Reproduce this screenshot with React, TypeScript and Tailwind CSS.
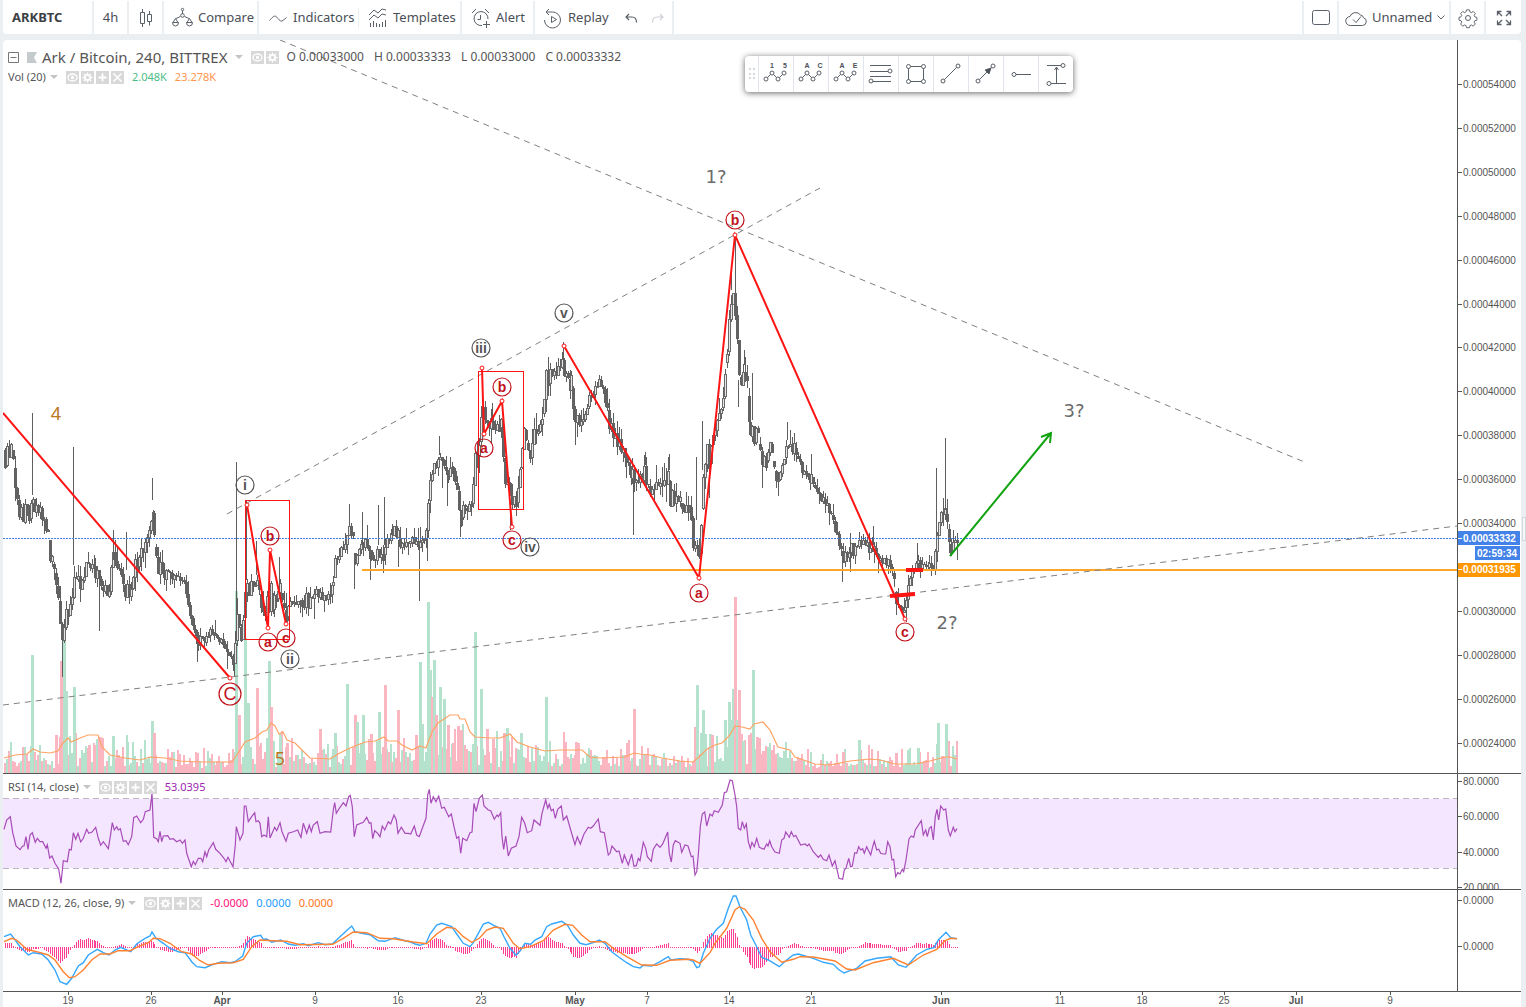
import React from 'react';

type Point = [number, number];
type Band = [number, number, number];

const STEP = 1.967;
const FIRST_BAR = 5;
const BAR_COUNT = 485;

// x, top and bottom of the range in which the bodies trade
const BANDS: Band[] = [
  [4, 447, 475], [8, 444, 462], [11, 440, 462], [13, 450, 472], [16, 477, 503], [19, 500, 517], [22, 510, 523],
  [26, 497, 525], [29, 513, 532], [32, 492, 510], [36, 495, 513], [40, 505, 517], [44, 510, 527], [48, 523, 538],
  [50, 540, 563], [53, 560, 570], [56, 573, 593], [59, 593, 613], [61, 608, 667], [63, 627, 670], [65, 610, 628],
  [68, 607, 630], [71, 593, 608], [74, 563, 607], [77, 563, 587], [80, 573, 593], [84, 567, 590], [88, 555, 573],
  [92, 557, 573], [96, 560, 580], [99, 567, 590], [102, 580, 593], [106, 583, 597], [109, 587, 603], [112, 557, 587],
  [114, 543, 567], [117, 560, 570], [121, 567, 577], [124, 577, 597], [128, 583, 597], [132, 580, 597], [134, 550, 580],
  [138, 547, 567], [142, 547, 563], [146, 535, 550], [150, 527, 537], [153, 493, 533], [155, 533, 567], [157, 560, 570],
  [160, 550, 582], [164, 567, 582], [168, 565, 577], [172, 570, 582], [178, 572, 583], [184, 577, 587], [187, 583, 607],
  [191, 603, 627], [194, 623, 637], [198, 630, 647], [202, 633, 643], [206, 632, 643], [210, 627, 637], [214, 627, 637],
  [218, 635, 642], [222, 637, 647], [226, 643, 657], [230, 647, 660], [233, 653, 668], [235, 640, 663], [237, 603, 640],
  [239, 613, 633], [241, 627, 643], [244, 573, 637], [246, 572, 597], [249, 580, 600], [253, 580, 593], [257, 573, 590],
  [260, 587, 607], [263, 607, 620], [266, 613, 622], [268, 577, 627], [270, 577, 627], [273, 593, 613], [276, 590, 603],
  [280, 580, 593], [283, 600, 610], [286, 610, 623], [289, 600, 613], [293, 597, 607], [298, 597, 610], [303, 593, 610],
  [308, 592, 610], [311, 590, 610], [316, 587, 597], [320, 590, 603], [325, 595, 600], [330, 590, 598], [333, 577, 593],
  [335, 553, 577], [339, 550, 563], [343, 543, 553], [347, 533, 545], [350, 520, 533], [353, 523, 553], [355, 553, 578],
  [358, 547, 560], [363, 540, 550], [368, 537, 553], [371, 547, 567], [375, 550, 567], [379, 547, 565], [383, 547, 563],
  [386, 537, 550], [390, 533, 542], [394, 523, 540], [397, 523, 540], [399, 537, 547], [404, 540, 547], [409, 540, 547],
  [413, 535, 545], [419, 540, 548], [423, 533, 547], [426, 530, 538], [428, 490, 530], [430, 467, 500], [434, 463, 473],
  [438, 457, 467], [440, 447, 463], [444, 460, 470], [448, 463, 480], [452, 463, 473], [455, 463, 487], [458, 487, 503],
  [461, 500, 527], [464, 502, 513], [468, 503, 513], [472, 498, 507], [475, 440, 497], [478, 433, 460], [480, 433, 450],
  [482, 377, 433], [484, 400, 417], [487, 417, 427], [491, 418, 433], [495, 423, 437], [499, 423, 433], [501, 410, 427],
  [504, 433, 487], [507, 460, 507], [510, 460, 520], [512, 493, 520], [514, 490, 507], [517, 490, 510], [520, 457, 487],
  [523, 425, 457], [526, 430, 450], [529, 450, 460], [532, 440, 457], [535, 423, 440], [538, 423, 437], [541, 423, 437],
  [543, 397, 420], [546, 367, 400], [550, 368, 383], [554, 370, 380], [558, 365, 377], [561, 355, 370], [564, 360, 380],
  [568, 368, 380], [571, 370, 400], [574, 397, 420], [578, 413, 428], [582, 417, 428], [586, 403, 417], [590, 390, 403],
  [594, 387, 397], [598, 378, 390], [602, 380, 393], [606, 388, 407], [609, 410, 433], [613, 423, 440], [617, 433, 447],
  [621, 438, 453], [624, 446, 462], [628, 451, 470], [632, 459, 484], [637, 473, 490], [641, 470, 484], [645, 460, 481],
  [648, 477, 492], [651, 488, 501], [655, 481, 492], [660, 479, 488], [665, 477, 488], [668, 466, 484], [671, 488, 518],
  [675, 492, 503], [679, 492, 503], [683, 507, 518], [687, 499, 510], [691, 507, 518], [694, 514, 566], [697, 514, 569],
  [700, 529, 577], [702, 473, 529], [704, 444, 488], [707, 442, 473], [710, 433, 473], [713, 429, 444], [716, 418, 433],
  [720, 407, 422], [723, 396, 407], [725, 351, 396], [727, 348, 362], [729, 318, 351], [731, 285, 322], [733, 280, 307],
  [736, 288, 329], [738, 322, 381], [741, 377, 392], [744, 359, 381], [747, 366, 392], [749, 396, 447], [752, 418, 447],
  [755, 418, 447], [757, 414, 436], [760, 444, 459], [763, 455, 470], [766, 455, 470], [769, 440, 455], [772, 444, 466],
  [775, 470, 479], [779, 473, 490], [782, 459, 481], [785, 444, 459], [789, 438, 451], [793, 440, 455], [797, 451, 462],
  [801, 459, 473], [806, 470, 477], [811, 473, 484], [816, 484, 496], [821, 494, 503], [827, 501, 507], [831, 507, 521],
  [835, 521, 534], [839, 532, 555], [843, 551, 564], [847, 551, 558], [850, 540, 560], [855, 544, 555], [860, 536, 547],
  [866, 538, 549], [870, 544, 555], [874, 544, 551], [878, 551, 560], [883, 558, 568], [887, 558, 566], [891, 560, 573],
  [894, 573, 584], [896, 592, 610], [900, 603, 610], [904, 604, 614], [907, 588, 604], [910, 571, 588], [912, 566, 577],
  [917, 558, 569], [921, 555, 568], [925, 564, 569], [929, 562, 571], [933, 562, 573], [935, 540, 573], [938, 525, 540],
  [941, 508, 525], [945, 507, 514], [947, 514, 529], [949, 529, 544], [951, 544, 555], [954, 536, 547], [957, 538, 545],
];

// long single wicks: x, top, bottom
const WICKS: Band[] = [
  [32, 413, 495], [73, 447, 565], [152, 478, 500], [113, 530, 560], [126, 532, 570], [99, 570, 631], [236, 462, 640],
  [246, 500, 580], [256, 541, 575], [279, 557, 590], [62, 640, 677], [197, 640, 662], [234, 660, 677], [349, 504, 525],
  [362, 512, 545], [378, 505, 545], [384, 497, 545], [354, 560, 589], [370, 550, 580], [398, 540, 567], [419, 545, 601],
  [427, 530, 561], [439, 436, 455], [447, 470, 506], [442, 460, 488], [460, 520, 537], [482, 368, 400], [492, 403, 420],
  [510, 510, 530], [563, 342, 360], [575, 415, 445], [633, 480, 535], [626, 460, 478], [645, 452, 465], [669, 454, 470],
  [696, 457, 520], [702, 421, 470], [709, 466, 498], [731, 270, 290], [735, 235, 292], [744, 350, 365], [752, 373, 420],
  [738, 380, 407], [762, 460, 488], [787, 422, 440], [811, 454, 475], [842, 560, 582], [850, 533, 572], [873, 526, 545],
  [936, 468, 540], [945, 438, 510], [896, 600, 615], [917, 543, 560], [953, 530, 540], [302, 600, 617], [314, 600, 619],
];

// tall volume bars: x, top, 1 for a rising bar
const VOLUME_PEAKS: Band[] = [
  [32, 655, 1], [61, 661, 0], [64, 630, 1], [66, 691, 1], [74, 687, 1], [56, 735, 0], [89, 745, 0], [99, 737, 0],
  [113, 736, 1], [127, 742, 1], [152, 721, 1], [154, 733, 0], [236, 591, 1], [239, 715, 0], [245, 638, 1], [248, 703, 1],
  [257, 688, 0], [269, 661, 1], [271, 707, 0], [280, 736, 1], [287, 743, 0], [320, 729, 0], [335, 733, 1], [347, 684, 1],
  [355, 715, 0], [357, 722, 1], [363, 715, 1], [371, 734, 0], [379, 712, 1], [385, 685, 0], [398, 710, 0], [416, 735, 0],
  [420, 662, 1], [422, 724, 1], [428, 602, 1], [430, 670, 1], [432, 697, 0], [434, 660, 1], [436, 715, 0], [440, 687, 1],
  [444, 699, 1], [448, 725, 0], [458, 726, 0], [461, 730, 0], [475, 632, 1], [481, 689, 1], [487, 729, 0], [493, 739, 0],
  [504, 733, 0], [507, 728, 1], [521, 733, 1], [546, 697, 1], [565, 742, 0], [576, 742, 0], [634, 709, 0], [628, 747, 0],
  [695, 727, 0], [697, 685, 1], [701, 733, 1], [703, 710, 1], [705, 734, 1], [710, 734, 1], [712, 735, 0], [725, 720, 1],
  [729, 702, 1], [731, 720, 1], [733, 689, 1], [735, 597, 0], [737, 720, 1], [739, 690, 0], [741, 734, 0], [743, 741, 1],
  [749, 735, 0], [751, 733, 0], [753, 670, 1], [757, 737, 0], [763, 751, 0], [843, 752, 0], [859, 740, 1], [896, 753, 0],
  [918, 748, 1], [938, 723, 1], [946, 724, 1], [942, 756, 0], [944, 757, 0],
];

const VOLUME_AVERAGE: Point[] = [
  [4, 758], [15, 755], [27, 754], [33, 749], [40, 752], [50, 753], [58, 751], [62, 744], [68, 738], [71, 742], [80, 738],
  [88, 735], [98, 735], [102, 747], [110, 755], [125, 758], [140, 760], [150, 757], [165, 758], [180, 761], [200, 762],
  [232, 762], [240, 750], [245, 742], [255, 738], [262, 732], [267, 730], [271, 723], [275, 726], [279, 734], [283, 732],
  [287, 740], [295, 743], [302, 750], [310, 758], [330, 759], [338, 754], [350, 748], [365, 742], [375, 741], [384, 737],
  [388, 741], [397, 741], [402, 745], [412, 750], [420, 746], [426, 748], [432, 732], [438, 723], [450, 715], [458, 715],
  [460, 719], [465, 719], [470, 732], [475, 737], [490, 738], [500, 738], [510, 734], [517, 742], [530, 747], [545, 751],
  [560, 750], [582, 750], [590, 757], [600, 758], [625, 757], [634, 753], [640, 754], [650, 755], [662, 758], [680, 761],
  [693, 762], [700, 756], [707, 749], [715, 745], [722, 743], [730, 735], [735, 726], [742, 727], [750, 729], [754, 724],
  [763, 722], [770, 730], [778, 747], [790, 750], [795, 757], [815, 764], [830, 765], [850, 761], [870, 759], [880, 760],
  [895, 764], [915, 764], [930, 761], [945, 757], [950, 757], [957, 759],
];

// indicator traces are stored in thirds of a pixel, in two halves
const readTrace = (text: string, left: number): Point[] =>
  text.split(' ').map((pair) => {
    const [x, y] = pair.split(',').map(Number);
    return [left + x / 3, 770 + y / 3];
  });

const RSI: Point[] = [
  ...readTrace(
    '12,178 20,150 31,140 38,188 48,228 60,239 68,228 72,228 78,200 84,238 90,195 97,188 106,217 112,205 120,215 128,215 138,235 142,224 149,264 156,258 165,280 176,297 183,340 190,272 202,275 208,238 214,240 220,188 227,208 234,190 242,216 250,205 260,178 266,190 276,186 287,172 295,205 302,226 310,215 325,236 331,200 337,158 343,180 350,170 355,180 361,176 370,214 378,212 385,224 395,200 401,143 410,138 422,158 430,148 436,125 450,120 456,70 461,202 470,206 475,215 480,184 485,215 490,198 503,197 510,208 520,206 530,215 540,210 547,220 555,210 560,250 574,290 580,274 586,284 595,265 603,265 608,275 615,245 620,260 626,240 640,218 647,238 660,250 672,265 678,275 684,262 699,290 706,225 709,170 720,210 729,190 733,108 738,108 745,155 755,140 764,128 768,155 775,152 780,160 785,200 792,195 800,200 805,140 810,204 824,172 830,182 840,158 846,185 858,214 865,190 880,185 893,180 897,190 903,202 910,160 920,190 928,165 934,185 940,165 952,155 960,190 975,185 992,186 1000,120 1004,98 1009,130 1018,115 1030,98 1038,108 1046,80 1051,76 1057,110 1063,200 1070,165 1090,157 1100,142 1108,160 1113,158 1118,206 1124,182 1133,190 1140,200 1147,168 1154,180 1165,155 1172,162 1182,135 1189,150 1194,190 1204,172 1215,190 1225,190 1232,192 1243,168 1250,195 1258,200 1267,175 1278,145 1283,75 1288,58 1293,100 1300,80 1308,95 1316,78 1325,115 1333,112 1346,140 1354,132 1362,170 1370,205 1376,200 1382,250 1388,205 1400,212 1410,188 1416,186 1422,100 1428,125 1438,85',
    0
  ),
  ...readTrace(
    '7,75 12,108 25,120 32,122 43,148 51,135 55,140 62,128 66,200 71,238 77,198 85,258 94,235 108,228 117,200 125,142 134,160 142,188 155,182 162,150 180,166 186,130 197,90 203,115 208,103 214,122 220,118 226,145 233,118 244,108 250,150 260,138 272,180 285,224 292,200 301,222 312,192 325,172 332,175 340,168 355,147 361,185 373,188 385,255 390,250 396,228 410,245 417,243 427,280 433,255 445,285 455,252 462,289 469,287 475,265 480,272 490,217 497,235 502,260 514,274 520,238 530,222 540,232 548,222 563,186 568,250 574,276 580,225 586,212 600,220 605,247 615,225 624,228 634,260 639,258 645,315 650,305 655,255 661,170 667,132 674,126 680,168 690,132 697,138 703,122 715,127 727,105 733,68 740,65 750,30 757,32 765,75 770,110 775,175 782,180 787,155 793,175 799,162 805,215 811,235 816,217 823,230 830,205 838,232 852,238 860,222 864,228 869,212 875,230 885,246 898,250 905,210 912,205 917,186 928,202 934,185 941,200 947,196 962,225 975,222 982,228 987,222 1000,245 1015,262 1022,255 1030,268 1040,272 1047,255 1057,288 1065,272 1077,325 1088,328 1093,300 1098,295 1106,265 1112,290 1117,288 1124,248 1130,250 1136,230 1142,240 1148,236 1153,250 1160,230 1172,255 1178,230 1183,214 1190,240 1196,238 1202,250 1210,252 1217,252 1223,215 1230,230 1236,270 1241,268 1247,320 1253,308 1260,312 1267,298 1271,305 1278,270 1287,207 1294,198 1301,202 1306,180 1324,152 1330,195 1337,180 1342,200 1348,175 1354,170 1360,210 1366,140 1371,118 1376,150 1382,108 1391,120 1397,117 1405,180 1411,198 1420,172 1425,185 1431,176',
    480
  ),
];

const MACD: Point[] = [
  ...readTrace(
    '12,500 32,492 42,505 60,530 85,555 100,548 125,552 145,570 165,600 180,635 200,643 215,625 235,588 250,578 265,555 292,538 310,548 327,555 345,540 362,532 392,545 410,522 435,505 450,498 456,486 468,505 490,520 510,535 535,545 555,548 575,575 590,590 615,593 640,583 665,575 690,578 705,575 728,558 740,520 760,500 782,496 790,508 800,507 815,517 842,510 865,522 885,526 910,521 925,527 955,518 975,524 997,522 1020,500 1042,480 1055,468 1065,485 1085,490 1110,494 1135,512 1155,514 1185,503 1215,512 1232,516 1245,522 1260,526 1278,520 1290,492 1310,465 1325,460 1355,470 1370,492 1390,520 1410,530 1420,518 1438,485',
    0
  ),
  ...readTrace(
    '10,462 25,457 45,468 60,475 72,500 90,535 108,556 120,543 135,520 152,523 165,510 185,500 200,470 215,462 245,454 262,465 280,495 300,520 318,524 340,518 358,510 375,520 395,545 415,560 440,578 460,590 480,594 490,586 515,588 540,575 565,560 572,570 600,566 625,568 640,575 650,593 658,590 670,550 690,505 710,478 730,460 745,415 760,378 768,378 780,410 800,450 812,495 830,530 845,562 865,570 898,590 920,570 940,555 955,552 975,558 1000,565 1030,577 1060,583 1075,598 1092,609 1110,602 1130,595 1155,573 1190,565 1232,560 1255,585 1278,592 1310,555 1340,538 1362,533 1375,510 1398,487 1412,503 1431,506',
    480
  ),
];

const SIGNAL: Point[] = [
  ...readTrace(
    '12,515 35,505 50,510 80,538 110,545 145,555 165,570 190,605 208,623 225,620 250,600 275,570 300,552 330,552 355,542 390,542 415,530 445,518 460,505 480,506 510,520 545,545 575,552 600,572 625,585 655,580 700,578 730,568 755,530 780,510 820,512 860,514 900,524 998,523 1030,505 1060,486 1100,488 1140,505 1180,506 1240,516 1280,521 1310,492 1340,472 1365,475 1390,500 1415,517 1438,505',
    0
  ),
  ...readTrace(
    '20,480 45,471 70,475 100,520 120,536 150,530 190,512 220,480 255,463 278,466 305,495 330,515 375,515 400,535 440,560 485,585 530,586 570,571 625,568 640,570 660,580 690,548 705,520 740,475 765,420 778,410 795,418 820,450 845,505 870,545 905,577 940,568 960,560 1000,561 1065,573 1100,597 1125,600 1180,578 1240,565 1285,585 1330,555 1370,538 1395,512 1412,505 1431,506',
    480
  ),
];

const valueAt = (points: number[][], x: number, column = 1) => {
  if (x <= points[0][0]) return points[0][column];
  for (let i = 1; i < points.length; i++) {
    if (x <= points[i][0]) {
      const a = points[i - 1];
      const b = points[i];
      return a[column] + ((b[column] - a[column]) * (x - a[0])) / (b[0] - a[0]);
    }
  }
  return points[points.length - 1][column];
};

const createRandom = (seed: number) => () => {
  seed = (seed * 1664525 + 1013904223) % 4294967296;
  return seed / 4294967296;
};

const toPoints = (points: Point[]) => points.map(([x, y]) => `${x.toFixed(1)},${y.toFixed(1)}`).join(' ');

const buildBars = () => {
  const random = createRandom(11);
  let previous = 450;
  return Array.from({ length: BAR_COUNT }, (_, i) => {
    const x = Math.round(FIRST_BAR + i * STEP);
    const top = valueAt(BANDS, x, 1);
    const bottom = valueAt(BANDS, x, 2);
    const open = Math.min(Math.max(previous, top), bottom);
    const share = random();
    // lean away from the open so that most bodies span the range
    const close = open - top > bottom - open ? top + (bottom - top) * share * 0.6 : bottom - (bottom - top) * share * 0.6;
    previous = close;
    const high = Math.min(open, close) - random() * random() * 18;
    const deep = Math.max(open, close) + random() * random() * 18;
    const volume = 5 + random() * random() * 30;
    const busy = Math.max(0, 764 - valueAt(VOLUME_AVERAGE, x)) * random() * 0.7;
    return { x, open, close, high, deep, volume: volume + busy };
  });
};

const BARS = buildBars();

const AXIS_TEXT = "font-['Liberation_Sans',Arial,sans-serif] text-[10px]";

const Trend = ({ from, to }: { from: Point; to: Point }) => (
  <line x1={from[0]} y1={from[1]} x2={to[0]} y2={to[1]} stroke="#808080" strokeDasharray="6 5" />
);

const Wave = ({ points }: { points: Point[] }) => (
  <g stroke="#ff1414">
    <polyline points={toPoints(points)} fill="none" strokeWidth="2" />
    {points.map(([x, y]) => (
      <circle key={`${x}-${y}`} cx={x} cy={y} r="2" fill="#fff" />
    ))}
  </g>
);

const WaveLabel = ({ x, y, text, color = '#555555' }: { x: number; y: number; text: string; color?: string }) => (
  <g>
    <circle cx={x} cy={y} r="9" fill="none" stroke={color} strokeWidth="1.2" />
    <text
      x={x}
      y={y + 5}
      textAnchor="middle"
      fill={color}
      className="font-['Liberation_Sans',Arial,sans-serif] text-[14px] font-bold"
    >
      {text}
    </text>
  </g>
);

const RED = '#c1121c';

const PriceChart = () => (
  <svg className="block h-full w-full" role="img" aria-label="Ark / Bitcoin price chart">
    <g transform="translate(-3 -40)">
      <g shapeRendering="crispEdges">
        {BARS.map(({ x, volume, open, close }) => (
          <rect key={x} x={x - 1} y={773 - volume} width="2" height={volume} fill={close < open ? '#b4e2cc' : '#fab7c1'} />
        ))}
        {VOLUME_PEAKS.map(([x, top, up]) => (
          <rect key={x} x={x - 1} y={top} width="3" height={773 - top} fill={up ? '#b4e2cc' : '#fab7c1'} />
        ))}
      </g>
      <polyline points={toPoints(VOLUME_AVERAGE)} fill="none" stroke="#ffa364" strokeWidth="1.2" />
      <g shapeRendering="crispEdges">
        {BARS.map(({ x, open, close, high, deep }) => {
          const top = Math.round(Math.min(open, close));
          const height = Math.max(1, Math.round(Math.abs(open - close)));
          return (
            <g key={x}>
              <rect x={x} y={Math.round(high)} width="1" height={Math.round(deep - high)} fill="#5f5f5f" />
              {close > open ? (
                <rect x={x - 1} y={top} width="3" height={height} fill="#626262" />
              ) : (
                <rect x={x - 0.5} y={top + 0.5} width="2" height={height} fill="#e6e6e6" stroke="#6a6a6a" />
              )}
            </g>
          );
        })}
        {WICKS.map(([x, top, bottom]) => (
          <rect key={`${x}-${top}`} x={x} y={top} width="1" height={bottom - top} fill="#5f5f5f" />
        ))}
      </g>

      <line x1="3" y1="538.5" x2="110%" y2="538.5" stroke="#3f7ee0" strokeDasharray="2 1" />
      <line x1="362" y1="570" x2="110%" y2="570" stroke="#ffa628" strokeWidth="2" />

      <Trend from={[280, 40]} to={[1307, 463]} />
      <Trend from={[227, 514]} to={[820, 188]} />
      <Trend from={[3, 705]} to={[1457, 526]} />

      <rect x="245.5" y="500.5" width="44" height="139" fill="none" stroke="#ff1414" />
      <rect x="478.5" y="371.5" width="45" height="138" fill="none" stroke="#ff1414" />

      <polyline points="3,413 230,678" fill="none" stroke="#ff1414" strokeWidth="2" />
      <circle cx="230" cy="678" r="2" fill="#fff" stroke="#ff1414" />
      <Wave points={[[247, 505], [268, 628], [270, 550], [286, 624]]} />
      <Wave points={[[482, 368], [484, 434], [502, 401], [512, 527]]} />
      <Wave points={[[564, 346], [699, 578], [735, 235], [905, 619]]} />
      <line x1="890" y1="596" x2="915" y2="594" stroke="#ff1414" strokeWidth="4" />
      <line x1="906" y1="570" x2="923" y2="570" stroke="#ff1414" strokeWidth="4" />
      <path d="M950 556 L1051 433 M1041 437 L1051 433 L1050 443" fill="none" stroke="#12a312" strokeWidth="2" />

      <WaveLabel x={245} y={485} text="i" />
      <WaveLabel x={290} y={659} text="ii" />
      <WaveLabel x={481} y={348} text="iii" />
      <WaveLabel x={530} y={547} text="iv" />
      <WaveLabel x={564} y={313} text="v" />
      <WaveLabel x={268} y={642} text="a" color={RED} />
      <WaveLabel x={270} y={536} text="b" color={RED} />
      <WaveLabel x={286} y={638} text="c" color={RED} />
      <WaveLabel x={484} y={448} text="a" color={RED} />
      <WaveLabel x={502} y={387} text="b" color={RED} />
      <WaveLabel x={512} y={540} text="c" color={RED} />
      <WaveLabel x={735} y={220} text="b" color={RED} />
      <WaveLabel x={699} y={593} text="a" color={RED} />
      <WaveLabel x={905} y={632} text="c" color={RED} />
      <circle cx="230" cy="694" r="11" fill="none" stroke={RED} strokeWidth="1.2" />
      <g textAnchor="middle">
        <text x="230" y="700" fill={RED} className="font-['Liberation_Sans',Arial,sans-serif] text-[18px]">C</text>
        <g className="font-['DejaVu_Sans',Verdana,sans-serif] text-[18px]" fill="#6c6c6c">
          <text x="716" y="183">1?</text>
          <text x="947" y="629">2?</text>
          <text x="1074" y="417">3?</text>
        </g>
        <g className="font-['Noto_Sans',sans-serif] text-[18px]" fill="#b8761e">
          <text x="56" y="420">4</text>
          <text x="280" y="765">5</text>
        </g>
      </g>
    </g>
  </svg>
);

const PRICES = Array.from({ length: 16 }, (_, i) => ({
  label: `0.000${54 - i * 2}000`,
  y: Math.round(45 + i * 43.9),
}));

const AxisLabel = ({ y, label }: { y: number; label: string }) => (
  <g>
    <path d={`M0 ${y - 0.5}h4`} stroke="#555555" />
    <text x="5" y={y + 3} fill="#555555">{label}</text>
  </g>
);

const PriceAxis = () => (
  <svg className={`block h-full w-full ${AXIS_TEXT}`} role="img" aria-label="Price scale">
    {PRICES.filter(({ label }) => label !== '0.00032000').map(({ label, y }) => (
      <AxisLabel key={label} label={label} y={y} />
    ))}
    <g stroke="none" fill="#ffffff" className="font-bold">
      <rect y="491" width="62" height="14" fill="#4382e8" />
      <rect x="17" y="506" width="45" height="14" fill="#4382e8" />
      <rect y="523" width="62" height="14" fill="#ff9800" />
      <path d="M0 498.5h4M0 529.5h4" stroke="#ffffff" />
      <text x="5" y="502">0.00033332</text>
      <text x="19" y="517">02:59:34</text>
      <text x="5" y="533">0.00031935</text>
    </g>
  </svg>
);

const RsiChart = () => (
  <svg className="block h-full w-full" role="img" aria-label="RSI chart">
    <g transform="translate(-3 -774)">
      <rect x="3" y="799" width="110%" height="69" fill="#f5e6ff" />
      <g stroke="#bdb3c4" strokeDasharray="6 4">
        <line x1="3" y1="798.5" x2="110%" y2="798.5" />
        <line x1="3" y1="868.5" x2="110%" y2="868.5" />
      </g>
      <polyline points={toPoints(RSI)} fill="none" stroke="#a64bb8" strokeWidth="1.2" />
    </g>
  </svg>
);

const MacdChart = () => (
  <svg className="block h-full w-full" role="img" aria-label="MACD chart">
    <g transform="translate(-3 -890)">
      <g shapeRendering="crispEdges" fill="#ff3d92">
        {BARS.map(({ x }) => {
          const size = Math.round((valueAt(SIGNAL, x) - valueAt(MACD, x)) * 1.1);
          return <rect key={x} x={x} y={size > 0 ? 948 - size : 947} width="1" height={Math.max(1, Math.abs(size))} />;
        })}
      </g>
      <polyline points={toPoints(MACD)} fill="none" stroke="#35a7ff" strokeWidth="1.4" />
      <polyline points={toPoints(SIGNAL)} fill="none" stroke="#ff8230" strokeWidth="1.4" />
    </g>
  </svg>
);

const DATES: [number, string][] = [
  [68, '19'], [151, '26'], [222, 'Apr'], [315, '9'], [398, '16'], [481, '23'], [575, 'May'], [647, '7'],
  [729, '14'], [811, '21'], [941, 'Jun'], [1060, '11'], [1142, '18'], [1224, '25'], [1296, 'Jul'], [1390, '9'],
];

const Caret = () => (
  <svg width="8" height="4" viewBox="0 0 8 4" className="shrink-0" aria-hidden="true">
    <path d="M0 0h8L4 4z" fill="#c4c4c4" />
  </svg>
);

const GLYPHS: Record<string, React.ReactNode> = {
  Hide: (
    <>
      <ellipse cx="6.5" cy="6.5" rx="4.5" ry="3.5" />
      <circle cx="6.5" cy="6.5" r="1" fill="#fff" />
    </>
  ),
  Format: (
    <>
      <circle cx="6.5" cy="6.5" r="2.6" strokeWidth="1.8" />
      <path d="M6.5 1.5v2M6.5 9.5v2M1.5 6.5h2M9.5 6.5h2M3 3l1.4 1.4M8.6 8.6L10 10M10 3L8.6 4.4M4.4 8.6L3 10" />
    </>
  ),
  Add: <path d="M6.5 2.5v8M2.5 6.5h8" strokeWidth="1.8" />,
  Remove: <path d="M2.5 2.5l8 8M10.5 2.5l-8 8" strokeWidth="1.6" />,
};

const LegendButtons = ({ names }: { names: string[] }) => (
  <span className="flex gap-[2px]">
    {names.map((name) => (
      <button key={name} type="button" aria-label={name} className="h-[13px] w-[13px] bg-[#d8d8d8]">
        <svg viewBox="0 0 13 13" className="block h-full w-full" fill="none" stroke="#ffffff" strokeWidth="1.3">
          {GLYPHS[name]}
        </svg>
      </button>
    ))}
  </span>
);

const ALL_BUTTONS = ['Hide', 'Format', 'Add', 'Remove'];

interface PaneProps {
  className: string;
  chart: React.ReactNode;
  axis: React.ReactNode;
  legend: React.ReactNode;
}

const Pane: React.FC<PaneProps> = ({ className, chart, axis, legend }) => (
  <section className={`flex border-b border-[#555555] ${className}`}>
    <div className="relative min-w-0 flex-1 overflow-hidden">
      {chart}
      <div className="absolute left-[5px] top-[5px] text-[11px] text-[#555555]">{legend}</div>
    </div>
    <div className="w-16 shrink-0 overflow-hidden border-l border-[#555555]">{axis}</div>
  </section>
);

const Icon = ({ children, size = 22 }: { children: React.ReactNode; size?: number }) => (
  <svg
    width={size}
    height={size}
    viewBox={`0 0 ${size} ${size}`}
    fill="none"
    stroke="#5a6068"
    strokeWidth="1"
    className="shrink-0"
    aria-hidden="true"
  >
    {children}
  </svg>
);

interface ToolButtonProps {
  className: string;
  label?: string;
  children: React.ReactNode;
}

const ToolButton: React.FC<ToolButtonProps> = ({ className, label, children }) => (
  <button type="button" aria-label={label} className={`flex h-full shrink-0 items-center whitespace-nowrap ${className}`}>
    {children}
  </button>
);

const BORDER = 'border-r-2 border-[#ebeff2]';

const Header = () => (
  <header className="flex h-[34px] shrink-0 rounded-b bg-white pt-px text-[13px] text-[#4a4f57]">
    <ToolButton className={`w-[91px] pl-[9px] font-bold text-[#3c3f44] ${BORDER}`}>ARKBTC</ToolButton>
    <ToolButton className={`w-[35px] justify-center ${BORDER}`}>4h</ToolButton>
    <ToolButton label="Candles" className={`w-[35px] justify-center ${BORDER}`}>
      <Icon>
        <path d="M5.5 5.5h4v11h-4zM7.5 2v3.5M7.5 16.5v3.5M12.5 7.5h4v7h-4zM14.5 4v3.5M14.5 14.5v4" />
      </Icon>
    </ToolButton>
    <ToolButton className={`w-[95px] gap-[5px] pl-[7px] ${BORDER}`}>
      <Icon>
        <circle cx="11.5" cy="8.5" r="1.8" />
        <circle cx="11.5" cy="2.5" r="1.2" />
        <path d="M11.5 4v3M9.5 9.500L5 11.500M13.500 9.500l4.500 2M1.5 15.5h6a3 3.500 0 0 1-6 0zM15.500 15.500h6a3 3.500 0 0 1-6 0zM2 15.500l2.500-4 2.500 4M16 15.500l2.500-4 2.500 4" />
      </Icon>
      Compare
    </ToolButton>
    <div className="flex items-center">
      <ToolButton className="w-[99px] gap-1 pl-[8px]">
        <Icon>
          <path d="M2.5 13.5C5 11 7 8 9 9.5s4 5.500 6 4.500 3-2.500 4.500-3.500" />
        </Icon>
        Indicators
      </ToolButton>
      <span className="h-5 w-px bg-[#ebeff2]" />
    </div>
    <ToolButton className={`w-[103px] gap-1 pl-[8px] ${BORDER}`}>
      <Icon>
        <path d="M2 8l5-5 4 3 4-4 4 1M2 13l5-5 4 3 4-4 4 1M3.5 20v-4M6.5 20v-6M9.5 20v-4M12.5 20v-3M15.5 20v-5M18.5 20v-7" />
      </Icon>
      Templates
    </ToolButton>
    <ToolButton className={`w-[73px] gap-1 pl-[8px] ${BORDER}`}>
      <Icon>
        <path d="M12 18.5a7 7 0 1 1 6-6.5M10.5 8v4.5h-3M2 6l4-4M15 2l4 4M13 17.5h7M16.5 14v7" />
      </Icon>
      Alert
    </ToolButton>
    <ToolButton className="w-[82px] gap-1 pl-[7px]">
      <Icon>
        <path d="M4.5 5h6a8 8 0 1 1-8 8M7 2L4 5l3 3M9.5 9.5v6l5-3z" />
      </Icon>
      Replay
    </ToolButton>
    <ToolButton label="Undo" className="w-[27px] justify-center">
      <Icon size={14}>
        <path d="M5 3L2 6l3 3M2 6h6c3 0 4.5 2 4.5 5.5" strokeWidth="1.2" />
      </Icon>
    </ToolButton>
    <ToolButton label="Redo" className={`w-[30px] justify-center ${BORDER}`}>
      <Icon size={14}>
        <path d="M9 3l3 3-3 3M12 6H6c-3 0-4.5 2-4.5 5.5" stroke="#cdd0d4" strokeWidth="1.2" />
      </Icon>
    </ToolButton>

    <div className="ml-auto flex">
      <ToolButton label="Layout" className="w-[37px] justify-center border-x-2 border-[#ebeff2]">
        <Icon>
          <rect x="2.5" y="3.5" width="17" height="14" rx="2" />
        </Icon>
      </ToolButton>
      <ToolButton className={`w-[112px] gap-[5px] pl-[6px] ${BORDER}`}>
        <Icon>
          <path d="M5.5 18.5h12a4 4 0 0 0 1-7.800A3.500 3.500 0 0 0 15.500 8 6 6 0 0 0 5 9.500a4.500 4.500 0 0 0 .5 9zM8 12.500l3 3 5-6" />
        </Icon>
        Unnamed
        <svg width="8" height="5" viewBox="0 0 8 5" fill="none" stroke="#5a6068" className="shrink-0" aria-hidden="true">
          <path d="M0.5 0.5L4 4l3.5-3.5" />
        </svg>
      </ToolButton>
      <ToolButton label="Settings" className={`w-[35px] justify-center ${BORDER}`}>
        <Icon>
          <circle cx="11" cy="11" r="2.5" />
          <path d="M9.5 2.5h3l.6 2.200 1.500.7 2-1.200 2.200 2.200-1.200 2 .7 1.500 2.200.6v3l-2.200.6-.7 1.500 1.200 2-2.200 2.200-2-1.200-1.500.7-.6 2.200h-3l-.6-2.200-1.500-.7-2 1.200-2.200-2.200 1.200-2-.7-1.500-2.200-.6v-3l2.200-.6.7-1.500-1.200-2 2.200-2.200 2 1.200 1.500-.7z" transform="translate(.6 .5) scale(.94)" />
        </Icon>
      </ToolButton>
      <ToolButton label="Full screen" className="w-[35px] justify-center">
        <Icon size={16}>
          <path d="M1.5 5.5v-4h4M1.5 1.5l4.5 4.5M10.5 1.5h4v4M14.5 1.5L10 6M1.5 10.5v4h4M1.5 14.5L6 10M10.5 14.5h4v-4M14.5 14.5L10 10" strokeWidth="1.3" />
        </Icon>
      </ToolButton>
    </div>
  </header>
);

const Dot = ({ x, y }: { x: number; y: number }) => <circle cx={x} cy={y} r="2" fill="#fff" />;

const ElliottGlyph = ({ left, right }: { left: string; right: string }) => (
  <>
    <path d="M3 19l6-6 6 6 6-6" />
    <Dot x={3} y={19} />
    <Dot x={9} y={13} />
    <Dot x={15} y={19} />
    <Dot x={21} y={13} />
    <g stroke="none" fill="#4a4f57" textAnchor="middle" className="font-['Liberation_Sans',Arial,sans-serif] text-[7px] font-bold">
      <text x="9" y="8">{left}</text>
      <text x="22" y="8">{right}</text>
    </g>
  </>
);

const DRAW_TOOLS: { name: string; glyph: React.ReactNode }[] = [
  { name: 'Elliott impulse wave', glyph: <ElliottGlyph left="1" right="5" /> },
  { name: 'Elliott correction wave', glyph: <ElliottGlyph left="A" right="C" /> },
  { name: 'Elliott triangle wave', glyph: <ElliottGlyph left="A" right="E" /> },
  {
    name: 'Fib retracement',
    glyph: (
      <>
        <path d="M2 5.5h21M2 11.5h19M2 16.5h21M4 21.5h19" />
        <Dot x={22} y={11} />
        <Dot x={3} y={21} />
      </>
    ),
  },
  {
    name: 'Rectangle',
    glyph: (
      <>
        <rect x="5.5" y="6.5" width="15" height="15" />
        <Dot x={5.5} y={6.5} />
        <Dot x={20.5} y={6.5} />
        <Dot x={5.5} y={21.5} />
        <Dot x={20.5} y={21.5} />
      </>
    ),
  },
  {
    name: 'Trend line',
    glyph: (
      <>
        <path d="M5 21L20 6" />
        <Dot x={5} y={21} />
        <Dot x={20} y={6} />
      </>
    ),
  },
  {
    name: 'Arrow',
    glyph: (
      <>
        <path d="M5 21L20 6" />
        <path d="M18 8l-2 6-4-4z" fill="#4a4f57" />
        <Dot x={5} y={21} />
        <Dot x={20} y={6} />
      </>
    ),
  },
  {
    name: 'Horizontal ray',
    glyph: (
      <>
        <path d="M6 14.5h17" />
        <Dot x={6} y={14.5} />
      </>
    ),
  },
  {
    name: 'Price range',
    glyph: (
      <>
        <path d="M4 5.5h16M6 23.5h17M13.5 23V8M11.5 10l2-3 2 3" />
        <Dot x={20} y={5.5} />
        <Dot x={6} y={23.5} />
      </>
    ),
  },
];

const DrawingBar = () => (
  <div className="absolute left-[745px] top-14 flex h-9 rounded-sm bg-white shadow-[0_1px_6px_rgba(0,0,0,0.6)]">
    <svg width="13" height="36" fill="#d5d7da" aria-hidden="true">
      {[12, 17, 21].map((y) => (
        <path key={y} d={`M4 ${y}h2v2h-2zM8 ${y}h2v2h-2z`} />
      ))}
    </svg>
    {DRAW_TOOLS.map(({ name, glyph }) => (
      <button
        key={name}
        type="button"
        aria-label={name}
        className="flex w-[35px] items-center justify-center border-l border-[#e1e6ec] pb-[3px]"
      >
        <Icon size={26}>{glyph}</Icon>
      </button>
    ))}
  </div>
);

const App: React.FC = () => {
  return (
    <div className="relative flex min-h-screen flex-col bg-[#ebeff2] pl-[3px] pr-[5px] font-['Noto_Sans','Open_Sans',sans-serif]">
      <Header />
      <main className="mt-[6px] flex flex-1 flex-col rounded-t bg-white">
        <Pane
          className="min-h-[734px] flex-1"
          chart={<PriceChart />}
          axis={<PriceAxis />}
          legend={
            <div className="flex flex-col pt-px">
              <div className="flex h-[22px] items-center whitespace-nowrap">
                <svg width="11" height="11" fill="none" stroke="#777777" aria-hidden="true">
                  <path d="M.5.5h10v10H.5zM2.5 5.5h6" />
                </svg>
                <svg width="10" height="11" className="ml-2 mr-[5px]" aria-hidden="true">
                  <path d="M0 0h10L7 5.5l3 5.5H0z" fill="#c5cacd" />
                </svg>
                <h1 className="text-[15px]">Ark / Bitcoin, 240, BITTREX</h1>
                <span className="mx-2">
                  <Caret />
                </span>
                <LegendButtons names={['Hide', 'Format']} />
                <div className="ml-[7px] flex gap-[10px] text-[12px]">
                  <span>O 0.00033000</span>
                  <span>H 0.00033333</span>
                  <span>L 0.00033000</span>
                  <span>C 0.00033332</span>
                </div>
              </div>
              <div className="flex h-[18px] items-center gap-2">
                <span className="flex items-center gap-1">
                  Vol (20) <Caret />
                </span>
                <LegendButtons names={ALL_BUTTONS} />
                <span className="text-[#4dbd85]">2.048K</span>
                <span className="text-[#ff954d]">23.278K</span>
              </div>
            </div>
          }
        />
        <Pane
          className="h-[116px] shrink-0"
          chart={<RsiChart />}
          axis={
            <svg className={`block h-full w-full ${AXIS_TEXT}`} role="img" aria-label="RSI scale">
              <AxisLabel y={8} label="80.0000" />
              <AxisLabel y={43} label="60.0000" />
              <AxisLabel y={79} label="40.0000" />
              <AxisLabel y={114} label="20.0000" />
            </svg>
          }
          legend={
            <div className="flex items-center gap-2">
              <span className="flex items-center gap-1">
                RSI (14, close) <Caret />
              </span>
              <LegendButtons names={ALL_BUTTONS} />
              <span className="text-[#9c27b0]">53.0395</span>
            </div>
          }
        />
        <Pane
          className="h-[102px] shrink-0"
          chart={<MacdChart />}
          axis={
            <svg className={`block h-full w-full ${AXIS_TEXT}`} role="img" aria-label="MACD scale">
              <AxisLabel y={11} label="0.0000" />
              <AxisLabel y={57} label="0.0000" />
            </svg>
          }
          legend={
            <div className="flex items-center gap-2">
              <span className="flex items-center gap-1">
                MACD (12, 26, close, 9) <Caret />
              </span>
              <LegendButtons names={ALL_BUTTONS} />
              <span className="text-[#ff0f78]">-0.0000</span>
              <span className="text-[#1a9aff]">0.0000</span>
              <span className="text-[#ff7518]">0.0000</span>
            </div>
          }
        />
        <svg className={`block h-[15px] w-full shrink-0 ${AXIS_TEXT}`} role="img" aria-label="Time scale">
          {DATES.map(([x, label]) => (
            <g key={x} textAnchor="middle" fill="#555555">
              <path d={`M${x - 2.5} 0v3`} stroke="#555555" />
              <text x={x - 3} y="12" className={label.length === 3 ? 'font-bold' : 'font-normal'}>
                {label}
              </text>
            </g>
          ))}
        </svg>
      </main>
      <DrawingBar />
      <span className="absolute right-0 top-[517px] h-6 w-1 border border-[#d3d8dd] bg-[#f5f7f9]" />
    </div>
  );
};

export default App;
